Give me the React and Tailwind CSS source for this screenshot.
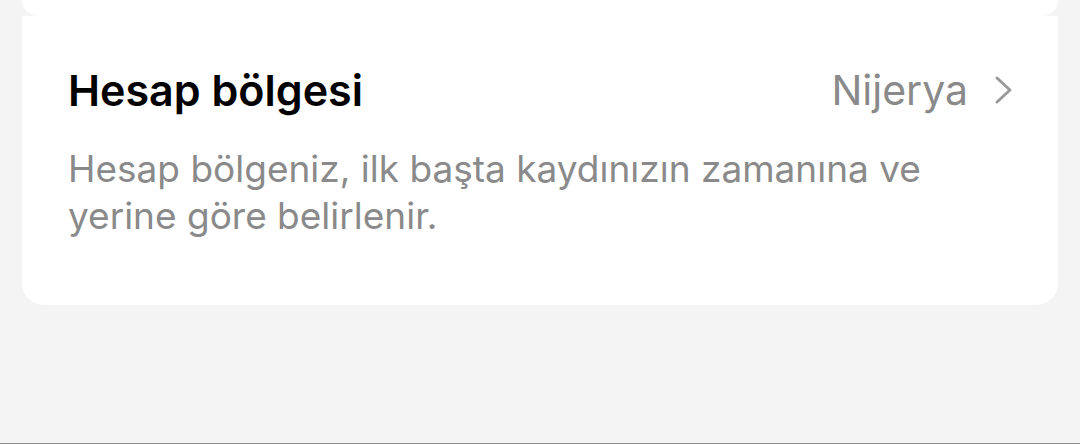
export default function App() {
  return (
    <div className="h-[444px] w-[1080px] bg-[#f4f4f4] border-b border-[#8c8c8c] px-[22px] overflow-hidden" style={{ fontFamily: 'Inter, "Noto Sans", sans-serif' }}>
      <div className="h-4 bg-white rounded-b-[22px]" />
      <div className="bg-white rounded-b-[22px] px-[46px] pt-[48px] pb-[66px]">
        <div className="flex items-center justify-between h-[52px]">
          <div className="text-[43px] font-semibold text-black leading-[52px]">Hesap bölgesi</div>
          <div className="flex items-center gap-[26px]">
            <span className="text-[41px] text-[#8a8a8a] leading-[52px]">Nijerya</span>
            <svg width="20" height="30" viewBox="0 0 20 30" fill="none" className="mr-[-2px]">
              <path d="M3 3 L16 15 L3 27" stroke="#9a9a9a" strokeWidth="3" strokeLinecap="round" strokeLinejoin="round" />
            </svg>
          </div>
        </div>
        <p className="mt-[29px] text-[37px] leading-[47px] text-[#8a8a8a]">
          Hesap bölgeniz, ilk başta kaydınızın zamanına ve<br />yerine göre belirlenir.
        </p>
      </div>
    </div>
  );
}
